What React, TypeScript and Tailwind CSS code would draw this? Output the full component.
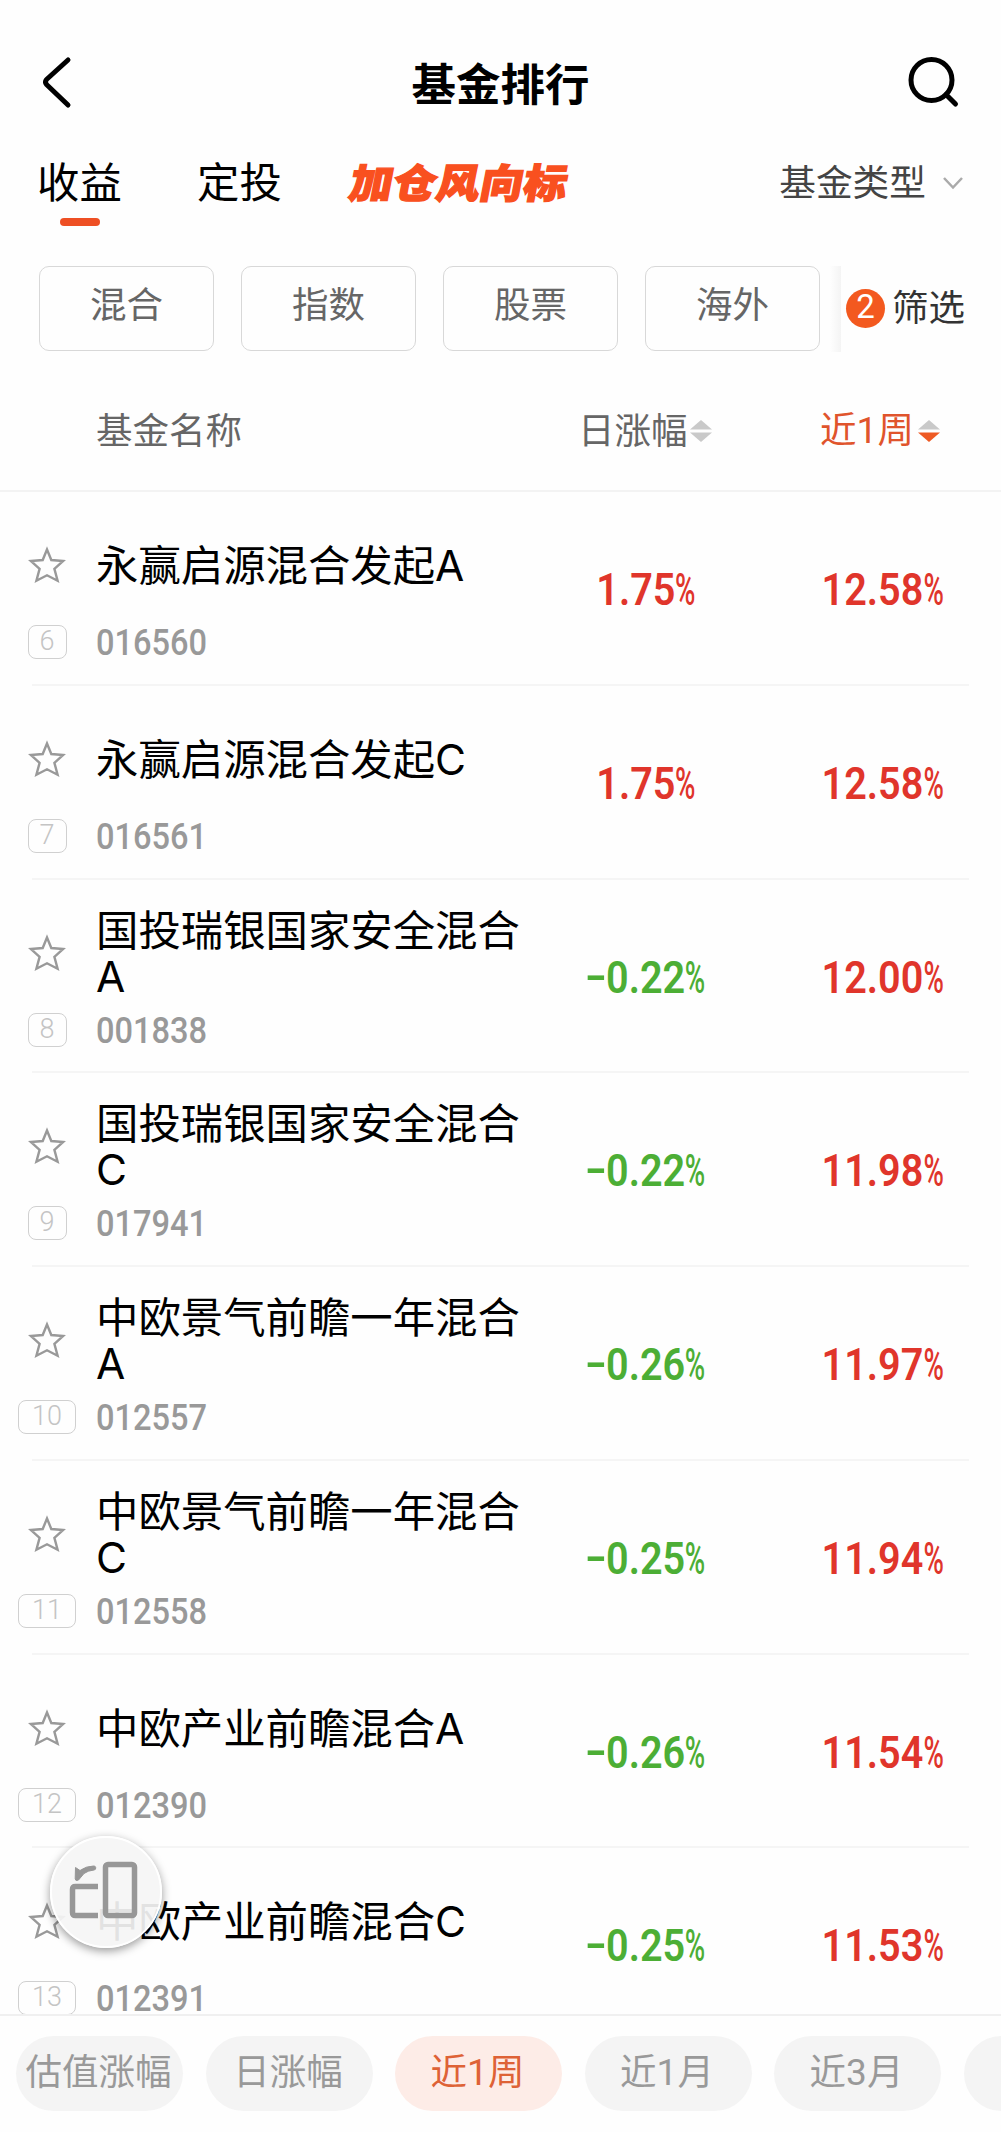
import { clsx } from "clsx"

const filters = ["混合", "指数", "股票", "海外"]

const funds = [
  { rank: 6, name: "永赢启源混合发起A", code: "016560", day: "1.75", week: "12.58" },
  { rank: 7, name: "永赢启源混合发起C", code: "016561", day: "1.75", week: "12.58" },
  { rank: 8, name: "国投瑞银国家安全混合A", code: "001838", day: "-0.22", week: "12.00" },
  { rank: 9, name: "国投瑞银国家安全混合C", code: "017941", day: "-0.22", week: "11.98" },
  { rank: 10, name: "中欧景气前瞻一年混合A", code: "012557", day: "-0.26", week: "11.97" },
  { rank: 11, name: "中欧景气前瞻一年混合C", code: "012558", day: "-0.25", week: "11.94" },
  { rank: 12, name: "中欧产业前瞻混合A", code: "012390", day: "-0.26", week: "11.54" },
  { rank: 13, name: "中欧产业前瞻混合C", code: "012391", day: "-0.25", week: "11.53" },
]

const periods = ["估值涨幅", "日涨幅", "近1周", "近1月", "近3月", ""]

function SortArrows({ active = false }: { active?: boolean }) {
  return (
    <svg className="w-[22px] h-[24px] shrink-0" viewBox="0 0 22 24">
      <path d="M11 1 22 10.5H0Z" fill="#c9c9c9" />
      <path d="M0 13.5H22L11 23Z" fill={active ? "#ee5a24" : "#c9c9c9"} />
    </svg>
  )
}

function Star() {
  return (
    <svg className="w-[38px] h-[38px]" viewBox="0 0 38 38" fill="none">
      <path
        d="M19 3.5 23.3 14 35.2 15 26.4 22.8 29.6 34.8 19 29.3 8.4 34.8 11.6 22.8 2.8 15 14.7 14Z"
        stroke="#999"
        strokeWidth="2.4"
      />
    </svg>
  )
}

// Digits get a fixed cell so that 1 and 3 take the same room
function PeriodLabel({ label }: { label: string }) {
  return (
    <>
      {label.split("").map((char, index) =>
        /\d/.test(char) ? (
          <span key={index} className="inline-block w-[21px] text-center font-[Roboto,sans-serif] text-[37px]">
            {char}
          </span>
        ) : (
          char
        )
      )}
    </>
  )
}

function Percent({ value }: { value: string }) {
  const negative = value.startsWith("-")
  return (
    <div
      className={clsx(
        "flex items-center justify-center h-[50px] pl-[2px] font-[Roboto,sans-serif] text-[45px] leading-[50px] whitespace-nowrap scale-x-[0.88]",
        negative ? "text-[#4cae35]" : "text-[#e0352b]"
      )}
    >
      {negative && (
        <span className="w-[22px] h-[54px] text-center font-semibold">
          <span className="inline-block scale-x-[1.55]">-</span>
        </span>
      )}
      <span className="font-semibold">{value.replace("-", "")}</span>
      <span className="w-[26px]">
        <span className="inline-block origin-left scale-x-[0.7] font-medium">%</span>
      </span>
    </div>
  )
}

function FundRow({ fund }: { fund: (typeof funds)[number] }) {
  return (
    <div className="h-[193.75px] shrink-0 px-[32px]">
      <div className="h-full flex border-b-2 border-[#f5f5f5]">
        <div className="w-[96px] -ml-[32px] shrink-0 flex flex-col items-center">
          <div className="h-[133px] pt-[54px] -ml-[2px]">
            <Star />
          </div>
          <div
            className={clsx(
              "h-[34px] -ml-[2px] rounded-lg border border-[#d0d0d0] text-center font-[Roboto,sans-serif] font-light text-[27px] leading-[31px] text-[#c4c4c4]",
              fund.rank > 9 ? "w-[58px]" : "w-[39px]"
            )}
          >
            {fund.rank}
          </div>
        </div>
        <div className="w-[444px] shrink-0">
          <div className="h-[124px] pt-[24px] flex items-center">
            <h3 className="w-[430px] text-[42.4px] leading-[46px] text-black">{fund.name}</h3>
          </div>
          <div className="h-[54px] flex items-center">
            <span className="origin-left scale-x-[0.905] font-[Roboto,sans-serif] font-medium text-[36px] leading-[28px] text-[#999]">
              {fund.code}
            </span>
          </div>
        </div>
        <div className="w-[213px] shrink-0 pt-[73px]">
          <Percent value={fund.day} />
        </div>
        <div className="w-[260px] shrink-0 pt-[73px]">
          <Percent value={fund.week} />
        </div>
      </div>
    </div>
  )
}

export default function App() {
  return (
    <div className="relative w-[1001px] h-[2132px] overflow-hidden flex flex-col bg-[#fefefe] font-[Inter,'Noto_Sans_CJK_SC',sans-serif]">
      {/* Title bar */}
      <header className="h-[140px] pt-[52px] pl-[37px] pr-[37px] flex items-start justify-between shrink-0">
        <svg className="w-[60px] h-[60px]" viewBox="0 0 60 60" fill="none" stroke="#000" strokeWidth="5" strokeLinecap="round" strokeLinejoin="round">
          <path d="M31 8 9.500 27.500Q7.500 30 9.500 32.500L31 53" />
        </svg>
        <h1 className="pt-[2px] text-[44.5px] leading-[62px] font-bold text-black">基金排行</h1>
        <svg className="w-[60px] h-[60px]" viewBox="0 0 60 60" fill="none" stroke="#000" strokeWidth="5" strokeLinecap="round">
          <circle cx="27.5" cy="28" r="20.5" />
          <path d="M42 42.500 51.500 52" />
        </svg>
      </header>

      {/* Tabs */}
      <nav className="h-[126px] pl-[37px] pr-[37px] pt-[14px] flex items-start shrink-0">
        <div className="w-[85px] flex flex-col items-center">
          <span className="text-[42.4px] leading-[58px] text-black">收益</span>
          <span className="mt-[6px] w-[40px] h-[8px] rounded bg-[#ee4f24]" />
        </div>
        <span className="ml-[75px] text-[42.4px] leading-[58px] text-black">定投</span>
        <span className="ml-[68px] w-[220px] text-[43.5px] leading-[58px] font-black text-[#f9501f] -skew-x-10 scale-y-[0.92] whitespace-nowrap [-webkit-text-stroke:1.5px_#f9501f]">
          加仓风向标
        </span>
        <div className="ml-auto flex items-center">
          <span className="text-[36.7px] leading-[58px] text-[#444]">基金类型</span>
          <svg className="ml-[16px] w-[22px] h-[14px]" viewBox="0 0 22 14" fill="none" stroke="#aaa" strokeWidth="2.5">
            <path d="M2 2 11 11.5 20 2" />
          </svg>
        </div>
      </nav>

      {/* Filter chips */}
      <div className="h-[86px] pl-[39px] flex items-start shrink-0">
        <div className="flex gap-[27px]">
          {filters.map((label) => (
            <div
              key={label}
              className="w-[175px] h-[85px] rounded-[10px] border border-[#d8d8d8] text-center text-[36.5px] leading-[77px] text-[#666]"
            >
              {label}
            </div>
          ))}
        </div>
        <div className="ml-[10px] w-[11px] h-[86px] bg-linear-to-r from-transparent to-[#f4f4f4]" />
        <div className="h-[84px] ml-[5px] flex items-center">
          <span className="w-[39px] h-[39px] rounded-full bg-[#f3591f] text-center font-[Roboto,sans-serif] text-[33px] leading-[36px] text-white">
            2
          </span>
          <span className="ml-[7px] text-[36.5px] leading-[84px] text-[#333]">筛选</span>
        </div>
      </div>

      {/* Column heads */}
      <div className="h-[140px] pt-[20px] pl-[96px] flex items-center border-b-2 border-[#f3f3f3] text-[36.5px] text-[#666] shrink-0">
        <span className="w-[482px]">基金名称</span>
        <div className="w-[242px] flex items-center">
          <span className="w-[112px]">日涨幅</span>
          <SortArrows />
        </div>
        <div className="flex items-center text-[#e0542c]">
          <span className="w-[98px] whitespace-nowrap">
            <PeriodLabel label="近1周" />
          </span>
          <SortArrows active />
        </div>
      </div>

      {/* Fund list */}
      <main className="h-[1522px] flex flex-col overflow-hidden shrink-0">
        {funds.map((fund) => (
          <FundRow key={fund.code} fund={fund} />
        ))}
      </main>

      {/* Period switcher */}
      <footer className="h-[118px] pt-[20px] pl-[16px] flex gap-[22.5px] border-t-2 border-[#f0f0f0] overflow-hidden shrink-0">
        {periods.map((label) => (
          <div
            key={label}
            className={clsx(
              "w-[167px] h-[75px] pr-[2px] shrink-0 rounded-full text-center text-[36.5px] leading-[72px] whitespace-nowrap",
              label === "近1周" ? "bg-[#fdece7] text-[#de6236]" : "bg-[#f4f4f4] text-[#999]"
            )}
          >
            <PeriodLabel label={label} />
          </div>
        ))}
      </footer>

      {/* Floating rotate button */}
      <button className="absolute left-[50px] top-[1836px] w-[112px] h-[112px] rounded-full bg-[#f5f5f5]/92 border-2 border-white shadow-[0_3px_10px_rgba(0,0,0,0.4)]">
        <svg className="w-[108px] h-[108px]" viewBox="52 1838 108 108" fill="none" stroke="#979797" strokeWidth="5.5">
          <rect x="105.5" y="1864.5" width="29" height="51" rx="2.5" />
          <path d="M98 1886.5H75.5Q72.5 1886.5 72.5 1889.5V1912.5Q72.5 1915.5 75.5 1915.5H98" />
          <path
            d="M75.5 1867.5 80 1870.5Q86 1866.2 93.5 1866A2 2 0 0 1 94 1870Q88 1870.500 84 1873.500L78.500 1880Q75.500 1881.500 75.200 1879Z"
            fill="#979797"
            strokeWidth="1"
            strokeLinejoin="round"
          />
        </svg>
      </button>
    </div>
  )
}
